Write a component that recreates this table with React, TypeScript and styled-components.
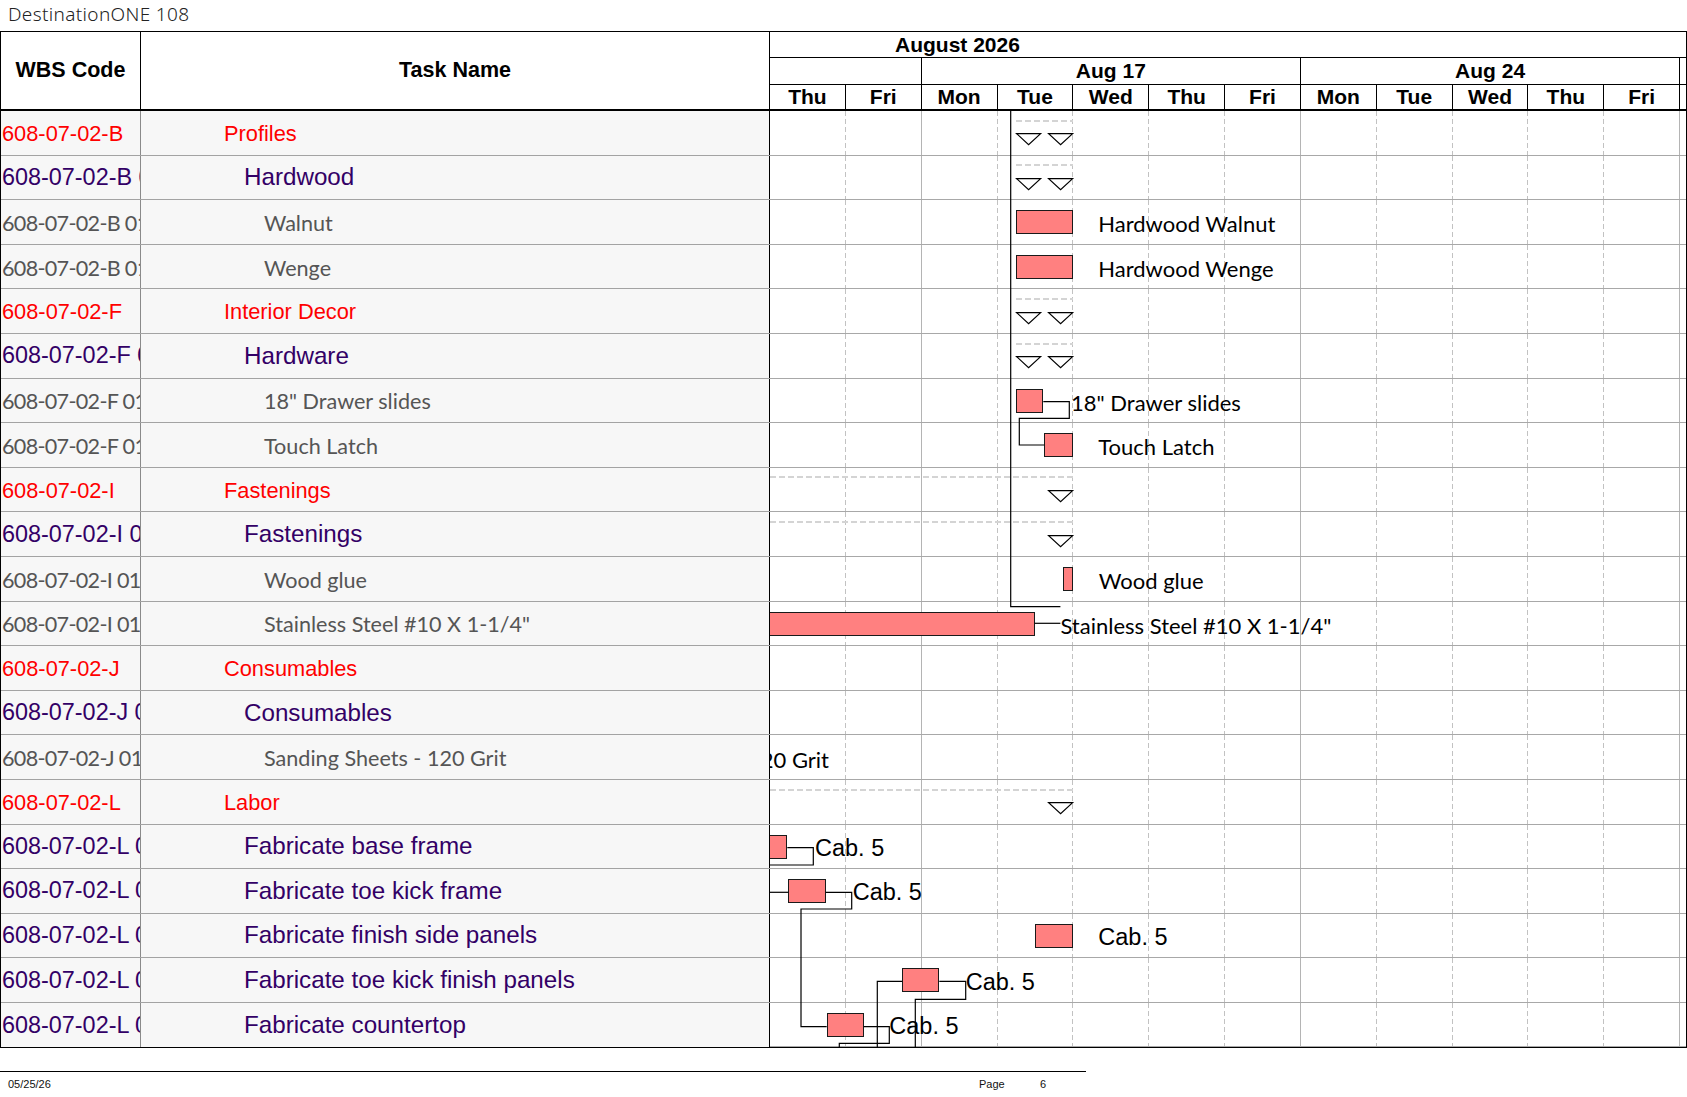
import styled, { createGlobalStyle } from "styled-components";

// geometry of the gantt canvas (page pixels)
const RH = 44.6;
const DAY = 75.85;
const CX = 770;
const CY = 111;

type Level = 1 | 2 | 3;
type Task = { wbs: string; name: string; level: Level };

const tasks: Task[] = [
	{ wbs: "608-07-02-B", name: "Profiles", level: 1 },
	{ wbs: "608-07-02-B 01", name: "Hardwood", level: 2 },
	{ wbs: "608-07-02-B 01 01", name: "Walnut", level: 3 },
	{ wbs: "608-07-02-B 01 02", name: "Wenge", level: 3 },
	{ wbs: "608-07-02-F", name: "Interior Decor", level: 1 },
	{ wbs: "608-07-02-F 01", name: "Hardware", level: 2 },
	{ wbs: "608-07-02-F 01 01", name: '18" Drawer slides', level: 3 },
	{ wbs: "608-07-02-F 01 02", name: "Touch Latch", level: 3 },
	{ wbs: "608-07-02-I", name: "Fastenings", level: 1 },
	{ wbs: "608-07-02-I 01", name: "Fastenings", level: 2 },
	{ wbs: "608-07-02-I 01 01", name: "Wood glue", level: 3 },
	{ wbs: "608-07-02-I 01 02", name: 'Stainless Steel #10 X 1-1/4"', level: 3 },
	{ wbs: "608-07-02-J", name: "Consumables", level: 1 },
	{ wbs: "608-07-02-J 01", name: "Consumables", level: 2 },
	{ wbs: "608-07-02-J 01 01", name: "Sanding Sheets - 120 Grit", level: 3 },
	{ wbs: "608-07-02-L", name: "Labor", level: 1 },
	{ wbs: "608-07-02-L 01", name: "Fabricate base frame", level: 2 },
	{ wbs: "608-07-02-L 02", name: "Fabricate toe kick frame", level: 2 },
	{ wbs: "608-07-02-L 03", name: "Fabricate finish side panels", level: 2 },
	{ wbs: "608-07-02-L 04", name: "Fabricate toe kick finish panels", level: 2 },
	{ wbs: "608-07-02-L 05", name: "Fabricate countertop", level: 2 },
];

const weeks = [
	{ label: "", days: 2 },
	{ label: "Aug 17", days: 5 },
	{ label: "Aug 24", days: 5 },
];

const days = ["Thu", "Fri", "Mon", "Tue", "Wed", "Thu", "Fri", "Mon", "Tue", "Wed", "Thu", "Fri"];

const bars = [
	{ row: 2, x1: 1016, x2: 1072.7 },
	{ row: 3, x1: 1016, x2: 1072.7 },
	{ row: 6, x1: 1016, x2: 1043.3 },
	{ row: 7, x1: 1044.3, x2: 1072.7 },
	{ row: 10, x1: 1063, x2: 1073 },
	{ row: 11, x1: 767, x2: 1034.8 },
	{ row: 16, x1: 767, x2: 787.3 },
	{ row: 17, x1: 788.3, x2: 825.7 },
	{ row: 18, x1: 1035, x2: 1072.7 },
	{ row: 19, x1: 902.3, x2: 939.3 },
	{ row: 20, x1: 826.7, x2: 863.7 },
];

const summaries = [
	{ row: 0, x1: 1016, marks: [1016, 1048.3] },
	{ row: 1, x1: 1016, marks: [1016, 1048.3] },
	{ row: 4, x1: 1016, marks: [1016, 1048.3] },
	{ row: 5, x1: 1016, marks: [1016, 1048.3] },
	{ row: 8, x1: 770, marks: [1048.3] },
	{ row: 9, x1: 770, marks: [1048.3] },
	{ row: 15, x1: 770, marks: [1048.3] },
];

type LabelKind = "text" | "cab";
const labels: { row: number; x: number; text: string; kind: LabelKind; alignEnd?: boolean }[] = [
	{ row: 2, x: 1098.3, text: "Hardwood Walnut", kind: "text" },
	{ row: 3, x: 1098.3, text: "Hardwood Wenge", kind: "text" },
	{ row: 6, x: 1071, text: '18" Drawer slides', kind: "text" },
	{ row: 7, x: 1098.3, text: "Touch Latch", kind: "text" },
	{ row: 10, x: 1098.7, text: "Wood glue", kind: "text" },
	{ row: 11, x: 1060.4, text: 'Stainless Steel #10 X 1-1/4"', kind: "text" },
	{ row: 14, x: 829, text: "Sanding Sheets - 120 Grit", kind: "text", alignEnd: true },
	{ row: 16, x: 815, text: "Cab. 5", kind: "cab" },
	{ row: 17, x: 852.7, text: "Cab. 5", kind: "cab" },
	{ row: 18, x: 1098.3, text: "Cab. 5", kind: "cab" },
	{ row: 19, x: 965.7, text: "Cab. 5", kind: "cab" },
	{ row: 20, x: 889.3, text: "Cab. 5", kind: "cab" },
];

// connector routes, page coordinates
const links: number[][][] = [
	[[1010.7, 111], [1010.7, 606.7], [1060.4, 606.7]],
	[[1034.8, 623.3], [1060.4, 623.3]],
	[[1043.3, 401.7], [1069.3, 401.7], [1069.3, 418.3], [1019.3, 418.3], [1019.3, 445], [1044.3, 445]],
	[[787.3, 847.7], [813.3, 847.7], [813.3, 865], [766, 865]],
	[[766, 892.3], [788.3, 892.3]],
	[[825.7, 892.3], [851.7, 892.3], [851.7, 909], [801, 909], [801, 1026.7], [826.7, 1026.7]],
	[[877.3, 1050], [877.3, 981.3], [902.3, 981.3]],
	[[939.3, 981.3], [965.7, 981.3], [965.7, 999.3], [915.3, 999.3], [915.3, 1050]],
	[[863.7, 1026.7], [889.3, 1026.7], [889.3, 1043.3], [839.3, 1043.3], [839.3, 1050]],
];

const GlobalStyle = createGlobalStyle`
	html, body {
		margin: 0;
		padding: 0;
		background: #fff;
		overflow: hidden;
	}
	body {
		font-family: "Liberation Sans", Arial, sans-serif;
		color: #000;
	}
`;

const Page = styled.div`
	width: 1687px;
	height: 1097px;
`;

const TitleBar = styled.div`
	height: 31px;
	line-height: 28px;
	padding-left: 8px;
	font-family: "Noto Sans", "DejaVu Sans", sans-serif;
	font-size: 19px;
	letter-spacing: 0.35px;
	font-weight: 300;
	color: #222;
`;

const Sheet = styled.div`
	border-left: 1px solid #000;
	width: 1686px;
`;

const HeaderRow = styled.div`
	display: flex;
	border-top: 1px solid #000;
	border-bottom: 2px solid #000;
	height: 80px;
	box-sizing: border-box;
`;

const HeadCell = styled.div<{ $w: number }>`
	width: ${(p) => p.$w}px;
	box-sizing: border-box;
	border-right: 1px solid #000;
	display: flex;
	align-items: center;
	justify-content: center;
	font-weight: bold;
	font-size: 21.5px;
`;

const Timescale = styled.div`
	width: 917px;
	box-sizing: border-box;
	border-right: 1px solid #000;
	display: flex;
	flex-direction: column;
	font-weight: bold;
	font-size: 21px;
`;

const MonthRow = styled.div`
	height: 26px;
	box-sizing: border-box;
	border-bottom: 1px solid #000;
	display: flex;
	align-items: center;
	padding-left: 125px;
`;

const WeekRow = styled.div`
	height: 27px;
	box-sizing: border-box;
	border-bottom: 1px solid #000;
	display: flex;
`;

const WeekCell = styled.div<{ $w: number }>`
	flex: 0 0 ${(p) => p.$w}px;
	box-sizing: border-box;
	border-right: 1px solid #000;
	display: flex;
	align-items: center;
	justify-content: center;
`;

const Filler = styled.div`
	flex: 1;
`;

const DayRow = styled.div`
	flex: 1;
	display: flex;
`;

const DayHead = styled.div`
	flex: 0 0 ${DAY}px;
	box-sizing: border-box;
	border-right: 1px solid #000;
	display: flex;
	align-items: center;
	justify-content: center;
`;

const BodyRow = styled.div`
	display: flex;
	border-bottom: 1px solid #000;
`;

const LeftTable = styled.div`
	width: 769px;
	display: flex;
	flex-direction: column;
`;

const LeftRow = styled.div`
	display: grid;
	grid-template-columns: 140px 629px;
	height: ${RH}px;
	box-sizing: border-box;
	border-bottom: 1px solid #a3a3a3;
	background: #f7f7f7;

	&:last-child {
		border-bottom: none;
	}
`;

const levelColor: Record<Level, string> = { 1: "#ff0000", 2: "#330066", 3: "#555555" };
const levelIndent: Record<Level, number> = { 1: 83, 2: 103, 3: 123 };
const nameSize: Record<Level, number> = { 1: 21.8, 2: 24.2, 3: 21.6 };
const wbsSize: Record<Level, number> = { 1: 21.8, 2: 23.4, 3: 21.6 };

const Cell = styled.div<{ $level: Level }>`
	display: flex;
	align-items: center;
	overflow: hidden;
	white-space: nowrap;
	box-sizing: border-box;
	padding-top: ${(p) => (p.$level === 2 ? 0 : 2)}px;
	color: ${(p) => levelColor[p.$level]};
	font-family: ${(p) => (p.$level === 3 ? `Lato, "Open Sans", sans-serif` : `"Liberation Sans", Arial, sans-serif`)};
`;

const WbsCell = styled(Cell)`
	padding-left: 1px;
	border-right: 1px solid #8a8a8a;
	font-size: ${(p) => wbsSize[p.$level]}px;
	letter-spacing: ${(p) => (p.$level === 3 ? "-0.7px" : "0")};
`;

const NameCell = styled(Cell)`
	padding-left: ${(p) => levelIndent[p.$level]}px;
	border-right: 1px solid #000;
	font-size: ${(p) => nameSize[p.$level]}px;
`;

const Chart = styled.div`
	position: relative;
	width: 917px;
	box-sizing: border-box;
	border-right: 1px solid #000;
	overflow: hidden;
	background: #fff;
`;

const ChartRow = styled.div`
	display: flex;
	height: ${RH}px;
	box-sizing: border-box;
	border-bottom: 1px solid #a8a8a8;

	&:last-child {
		border-bottom: none;
	}
`;

const GridCell = styled.div<{ $solid: boolean }>`
	flex: 0 0 ${DAY}px;
	box-sizing: border-box;
	${(p) =>
		p.$solid
			? "border-right: 1px solid #b4b4b4;"
			: `background-image: repeating-linear-gradient(to bottom, #c2c2c2 0 5px, transparent 5px 8px);
		background-size: 1px 100%;
		background-position: right top;
		background-repeat: no-repeat;`}
`;

const Bar = styled.div`
	position: absolute;
	height: 24px;
	box-sizing: border-box;
	background: #ff8080;
	border: 1px solid #1a1a1a;
`;

const SummaryDash = styled.div`
	position: absolute;
	height: 2px;
	background-image: repeating-linear-gradient(to right, #d4d4d4 0 6px, transparent 6px 9px);
`;

const Marker = styled.svg`
	position: absolute;
	width: 26px;
	height: 13px;
	overflow: visible;
`;

const Links = styled.svg`
	position: absolute;
	left: 0;
	top: 0;
	pointer-events: none;
`;

const BarLabel = styled.span<{ $kind: LabelKind }>`
	position: absolute;
	height: ${RH}px;
	box-sizing: border-box;
	padding-top: 3px;
	display: flex;
	align-items: center;
	white-space: nowrap;
	color: #000;
	font-family: ${(p) => (p.$kind === "cab" ? `"Liberation Sans", Arial, sans-serif` : `Lato, "Open Sans", sans-serif`)};
	font-size: ${(p) => (p.$kind === "cab" ? "23.5px" : "22px")};
`;

const FooterLine = styled.div`
	margin-top: 23px;
	width: 1086px;
	border-top: 1px solid #000;
`;

const Footer = styled.div`
	display: grid;
	grid-template-columns: 971px 61px auto;
	padding-left: 8px;
	padding-top: 6px;
	font-size: 11px;
	line-height: 13px;
	color: #111;
`;

const App = () => {
	const chartH = tasks.length * RH;
	return (
		<Page>
			<GlobalStyle />
			<TitleBar>DestinationONE 108</TitleBar>
			<Sheet>
				<HeaderRow>
					<HeadCell $w={140}>WBS Code</HeadCell>
					<HeadCell $w={629}>Task Name</HeadCell>
					<Timescale>
						<MonthRow>August 2026</MonthRow>
						<WeekRow>
							{weeks.map((w, i) => (
								<WeekCell key={i} $w={w.days * DAY}>
									{w.label}
								</WeekCell>
							))}
							<Filler />
						</WeekRow>
						<DayRow>
							{days.map((d, i) => (
								<DayHead key={i}>{d}</DayHead>
							))}
							<Filler />
						</DayRow>
					</Timescale>
				</HeaderRow>

				<BodyRow>
					<LeftTable>
						{tasks.map((t, i) => (
							<LeftRow key={i}>
								<WbsCell $level={t.level}>{t.wbs}</WbsCell>
								<NameCell $level={t.level}>{t.name}</NameCell>
							</LeftRow>
						))}
					</LeftTable>

					<Chart>
						{tasks.map((_, r) => (
							<ChartRow key={r}>
								{days.map((_, i) => (
									<GridCell key={i} $solid={i === 1 || i === 6 || i === 11} />
								))}
								<Filler />
							</ChartRow>
						))}

						{summaries.map((s, i) => (
							<div key={i}>
								<SummaryDash style={{ left: s.x1 - CX, width: 1073 - s.x1, top: s.row * RH + 8.5 }} />
								{s.marks.map((m) => (
									<Marker key={m} style={{ left: m - CX, top: s.row * RH + 22.3 }} viewBox="0 0 26 13">
										<polygon points="0.6,0.6 24.6,0.6 12.6,11.6" fill="#fff" stroke="#000" strokeWidth="1.2" />
									</Marker>
								))}
							</div>
						))}

						{bars.map((b, i) => (
							<Bar key={i} style={{ left: b.x1 - CX, width: b.x2 - b.x1, top: b.row * RH + 10 }} />
						))}

						<Links width={916} height={chartH} viewBox={`0 0 916 ${chartH}`}>
							{links.map((pts, i) => (
								<polyline
									key={i}
									points={pts.map(([x, y]) => `${x - CX},${y - CY}`).join(" ")}
									fill="none"
									stroke="#000"
									strokeWidth="1.2"
								/>
							))}
						</Links>

						{labels.map((l, i) => (
							<BarLabel
								key={i}
								$kind={l.kind}
								style={{
									left: l.x - CX,
									top: l.row * RH,
									transform: l.alignEnd ? "translateX(-100%)" : undefined,
								}}
							>
								{l.text}
							</BarLabel>
						))}
					</Chart>
				</BodyRow>
			</Sheet>

			<FooterLine />
			<Footer>
				<span>05/25/26</span>
				<span>Page</span>
				<span>6</span>
			</Footer>
		</Page>
	);
};

export default App;
